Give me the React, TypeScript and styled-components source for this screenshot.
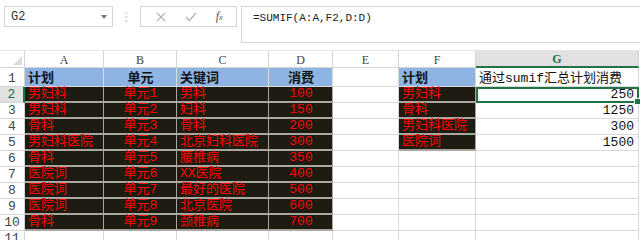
import React from 'react';
import styled, { createGlobalStyle } from 'styled-components';

type Fill = 'dark' | 'blue' | 'none';
type Align = 'left' | 'center' | 'right';

const COLS = ['A', 'B', 'C', 'D', 'E', 'F', 'G'];

const rows: (string | number)[][] = [
  ['男妇科', '单元1', '男科', 100, '男妇科', 250],
  ['男妇科', '单元2', '妇科', 150, '骨科', 1250],
  ['骨科', '单元3', '骨科', 200, '男妇科医院', 300],
  ['男妇科医院', '单元4', '北京妇科医院', 300, '医院词', 1500],
  ['骨科', '单元5', '腰椎病', 350],
  ['医院词', '单元6', 'XX医院', 400],
  ['医院词', '单元7', '最好的医院', 500],
  ['医院词', '单元8', '北京医院', 600],
  ['骨科', '单元9', '颈椎病', 700],
];

const App: React.FC = () => {
  return (
    <>
      <GlobalStyle />
      <Toolbar>
        <NameBox>
          <span>G2</span>
          <DropArrow />
        </NameBox>
        <Grip>⋮</Grip>
        <FuncBox>
          <FuncIcon>
            <svg width="10" height="10" viewBox="0 0 10 10">
              <path d="M1 1 L9 9 M9 1 L1 9" stroke="#b4b4b4" strokeWidth="1.2" fill="none" />
            </svg>
          </FuncIcon>
          <FuncIcon>
            <svg width="12" height="10" viewBox="0 0 12 10">
              <path d="M1 5 L4.5 8.5 L11 1" stroke="#b4b4b4" strokeWidth="1.3" fill="none" />
            </svg>
          </FuncIcon>
          <FxLabel>f<sub>x</sub></FxLabel>
        </FuncBox>
        <FormulaBar>=SUMIF(A:A,F2,D:D)</FormulaBar>
      </Toolbar>

      <Sheet>
        <Corner>
          <svg width="9" height="9" viewBox="0 0 9 9">
            <path d="M9 0 L9 9 L0 9 Z" fill="#dcdcdc" />
          </svg>
        </Corner>
        {COLS.map((c) => (
          <ColHeader key={c} active={c === 'G'}>{c}</ColHeader>
        ))}

        {/* row 1: headers */}
        <RowHeader>1</RowHeader>
        <Cell fill="blue" bold>计划</Cell>
        <Cell fill="blue" bold align="center">单元</Cell>
        <Cell fill="blue" bold>关键词</Cell>
        <Cell fill="blue" bold align="center">消费</Cell>
        <Cell />
        <Cell fill="blue" bold>计划</Cell>
        <Cell plain>通过sumif汇总计划消费</Cell>

        {rows.map((r, i) => {
          const n = i + 2;
          const hasF = r.length > 4;
          return (
            <React.Fragment key={n}>
              <RowHeader active={n === 2}>{n}</RowHeader>
              <Cell fill="dark">{r[0]}</Cell>
              <Cell fill="dark" align="center">{r[1]}</Cell>
              <Cell fill="dark">{r[2]}</Cell>
              <Cell fill="dark" align="center">{r[3]}</Cell>
              <Cell />
              <Cell fill={hasF ? 'dark' : 'none'}>{hasF ? r[4] : ''}</Cell>
              <Cell plain align="right" selected={n === 2}>
                {hasF ? r[5] : ''}
                {n === 2 && <FillHandle />}
              </Cell>
            </React.Fragment>
          );
        })}

        <RowHeader>11</RowHeader>
        {COLS.map((c) => (
          <Cell key={c} />
        ))}
      </Sheet>
    </>
  );
};

export default App;

// ============================================================================
// STYLED COMPONENTS
// ============================================================================

const GlobalStyle = createGlobalStyle`
  body {
    margin: 0;
    background: #ffffff;
    font-family: "Liberation Mono", "Noto Sans CJK SC", monospace;
    overflow: hidden;
  }
`;

const Toolbar = styled.div`
  display: flex;
  align-items: flex-start;
  height: 50px;
  padding: 6px 0 0 4px;
  box-sizing: border-box;
`;

const NameBox = styled.div`
  width: 109px;
  height: 21px;
  box-sizing: border-box;
  border: 1px solid #d4d4d4;
  display: flex;
  align-items: center;
  justify-content: space-between;
  padding: 0 5px 0 6px;
  font-size: 12px;
  color: #333;
`;

const DropArrow = styled.span`
  width: 0;
  height: 0;
  border-left: 3px solid transparent;
  border-right: 3px solid transparent;
  border-top: 4px solid #777;
`;

const Grip = styled.div`
  width: 27px;
  height: 21px;
  display: flex;
  align-items: center;
  justify-content: center;
  color: #b8b8b8;
  font-size: 12px;
  font-family: "DejaVu Sans", sans-serif;
`;

const FuncBox = styled.div`
  width: 97px;
  height: 21px;
  box-sizing: border-box;
  border: 1px solid #d4d4d4;
  display: flex;
  align-items: center;
  justify-content: space-around;
  padding: 0 4px 0 6px;
`;

const FuncIcon = styled.span`
  display: flex;
  align-items: center;
`;

const FxLabel = styled.span`
  font-family: "Liberation Serif", serif;
  font-style: italic;
  font-size: 12px;
  color: #555;
  sub {
    font-size: 8px;
    vertical-align: 0;
  }
`;

const FormulaBar = styled.div`
  margin-left: 4px;
  flex: 1;
  height: 37px;
  box-sizing: border-box;
  border: 1px solid #d4d4d4;
  border-right: none;
  padding: 3px 0 0 11px;
  font-size: 11px;
  line-height: 16px;
  color: #222;
`;

const Sheet = styled.div`
  display: grid;
  grid-template-columns: 25px 79px 73px 92px 64px 66px 77px 163px;
  grid-auto-rows: 16px;
  grid-template-rows: 18px 19px;
`;

const Corner = styled.div`
  border-right: 1px solid #d4d4d4;
  border-bottom: 1px solid #d4d4d4;
  border-top: 1px solid #e4e4e4;
  display: flex;
  align-items: flex-end;
  justify-content: flex-end;
  padding: 0 2px 2px 0;
`;

const ColHeader = styled.div<{ active?: boolean }>`
  border-top: 1px solid #e4e4e4;
  border-right: 1px solid #d4d4d4;
  border-bottom: ${({ active }) => (active ? '2px solid #217346' : '1px solid #d4d4d4')};
  background: ${({ active }) => (active ? '#e1e1e1' : '#ffffff')};
  color: ${({ active }) => (active ? '#217346' : '#444')};
  font-weight: ${({ active }) => (active ? 'bold' : 'normal')};
  font-family: "Liberation Serif", serif;
  font-size: 12px;
  display: flex;
  align-items: center;
  justify-content: center;
  padding-top: 2px;
`;

const RowHeader = styled.div<{ active?: boolean }>`
  border-right: ${({ active }) => (active ? '2px solid #217346' : '1px solid #d4d4d4')};
  border-bottom: 1px solid #d4d4d4;
  background: ${({ active }) => (active ? '#e1e1e1' : '#ffffff')};
  color: ${({ active }) => (active ? '#217346' : '#444')};
  font-size: 13px;
  display: flex;
  align-items: flex-end;
  justify-content: center;
  line-height: 15px;
`;

const fillColor = (fill?: Fill) => {
  switch (fill) {
    case 'dark': return '#1e1b12';
    case 'blue': return '#8db4e2';
    default: return '#ffffff';
  }
};

const Cell = styled.div<{
  fill?: Fill;
  align?: Align;
  bold?: boolean;
  plain?: boolean;
  selected?: boolean;
}>`
  position: relative;
  box-sizing: border-box;
  background: ${({ fill }) => fillColor(fill)};
  border-right: 1px solid ${({ fill }) => (fill === 'dark' ? '#a9a6a0' : '#d9d9d9')};
  border-bottom: ${({ fill }) => (fill === 'dark' ? '2px solid #a9a6a0' : '1px solid #d9d9d9')};
  color: ${({ fill, plain }) => (fill === 'dark' && !plain ? '#ff0000' : '#111')};
  font-weight: ${({ bold }) => (bold ? 'bold' : 'normal')};
  font-size: 13px;
  line-height: 15px;
  white-space: nowrap;
  display: flex;
  align-items: flex-end;
  justify-content: ${({ align }) =>
    align === 'center' ? 'center' : align === 'right' ? 'flex-end' : 'flex-start'};
  padding: 0 ${({ align }) => (align === 'right' ? '4px' : '2px')} 0 3px;
  outline: ${({ selected }) => (selected ? '2px solid #217346' : 'none')};
  outline-offset: -2px;
  z-index: ${({ selected }) => (selected ? 2 : 'auto')};
`;

const FillHandle = styled.span`
  position: absolute;
  right: -3px;
  bottom: -3px;
  width: 5px;
  height: 5px;
  background: #217346;
  border: 1px solid #fff;
`;
